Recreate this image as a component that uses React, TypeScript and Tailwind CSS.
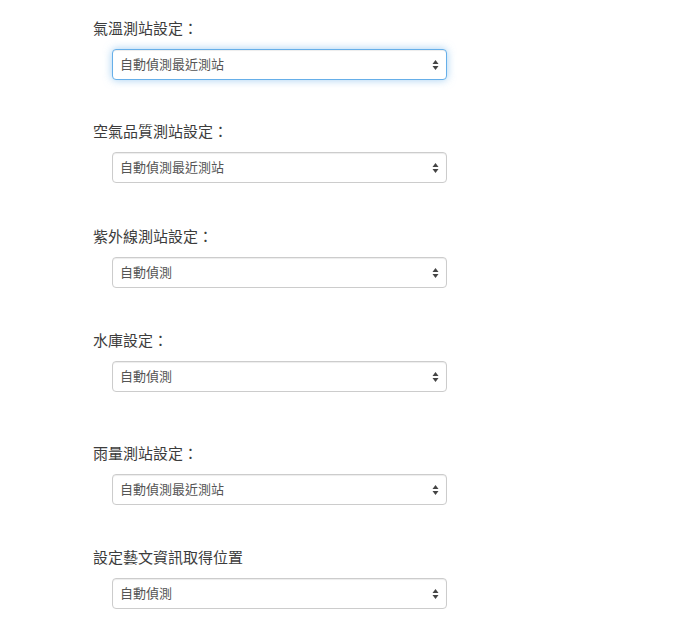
/* ── Station settings form ── */

const groups = [
  { label: "氣溫測站設定：", value: "自動偵測最近測站", focused: true, gap: "mt-0" },
  { label: "空氣品質測站設定：", value: "自動偵測最近測站", focused: false, gap: "mt-[42px]" },
  { label: "紫外線測站設定：", value: "自動偵測", focused: false, gap: "mt-[44px]" },
  { label: "水庫設定：", value: "自動偵測", focused: false, gap: "mt-[43px]" },
  { label: "雨量測站設定：", value: "自動偵測最近測站", focused: false, gap: "mt-[52px]" },
  { label: "設定藝文資訊取得位置", value: "自動偵測", focused: false, gap: "mt-[43px]" },
];

function SelectArrows() {
  return (
    <svg width="7" height="11" viewBox="0 0 7 11" className="pointer-events-none absolute right-[8px] top-1/2 -translate-y-1/2">
      <path d="M3.5 0.5L6.5 4.5H0.5Z" fill="#444" />
      <path d="M3.5 10.5L6.5 6.5H0.5Z" fill="#444" />
    </svg>
  );
}

export default function App() {
  return (
    <div
      className="min-h-[631px] w-[700px] bg-white pl-[93px] pt-[19px]"
      style={{ fontFamily: '"Helvetica Neue", "Liberation Sans", "Noto Sans CJK TC", sans-serif' }}
    >
      {groups.map((g) => (
        <div key={g.label} className={g.gap}>
          <div className="h-[20px] text-[15px] leading-[20px] text-[#3c3c3c]">{g.label}</div>
          <div className="relative ml-[19px] mt-[10px] w-[335px]">
            <select
              defaultValue={g.value}
              className={
                g.focused
                  ? "block h-[31px] w-full appearance-none rounded-[4px] border border-[#66afe9] bg-white pl-[7px] text-[13px] text-[#555] shadow-[inset_0_1px_1px_rgba(0,0,0,0.075),0_0_8px_rgba(102,175,233,0.6)] outline-none"
                  : "block h-[31px] w-full appearance-none rounded-[4px] border border-[#ccc] bg-white pl-[7px] text-[13px] text-[#555] shadow-[inset_0_1px_1px_rgba(0,0,0,0.075)] outline-none"
              }
            >
              <option>{g.value}</option>
            </select>
            <SelectArrows />
          </div>
        </div>
      ))}
    </div>
  );
}
